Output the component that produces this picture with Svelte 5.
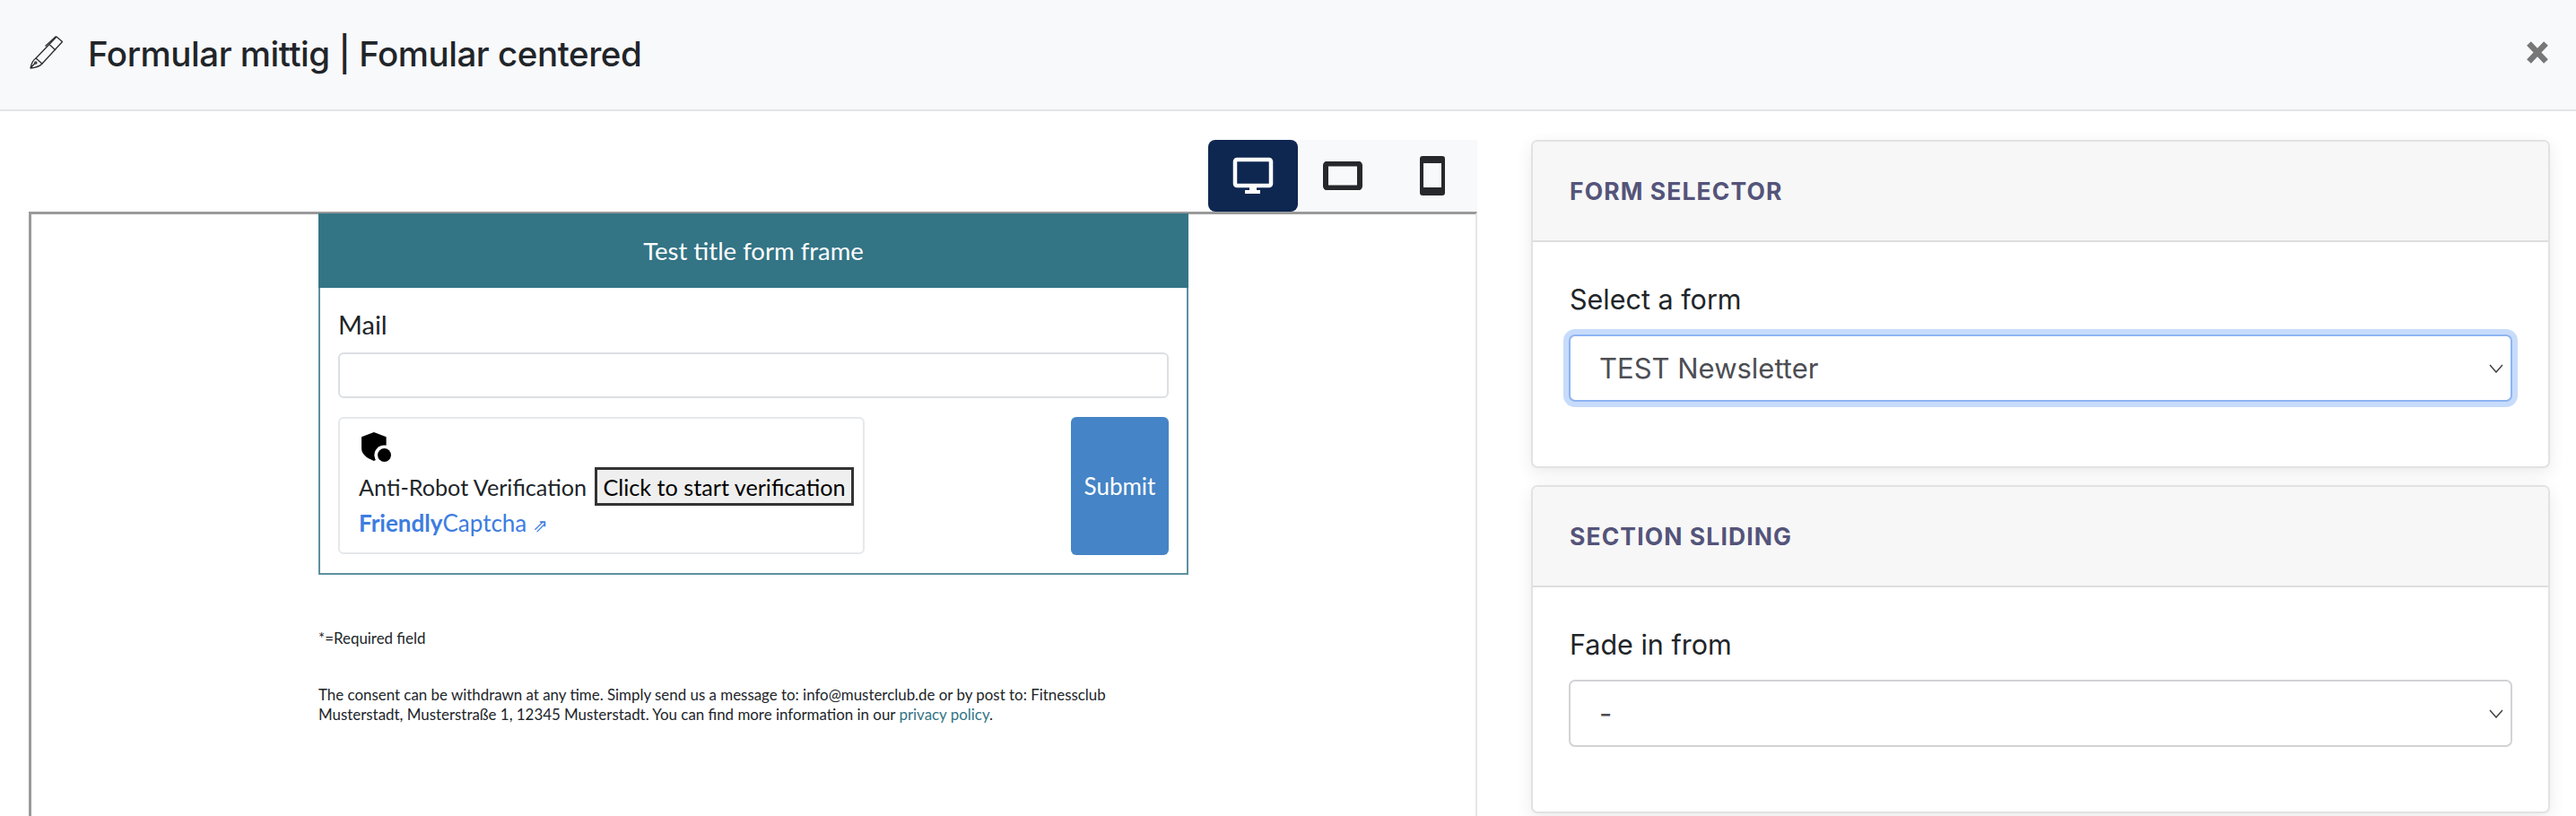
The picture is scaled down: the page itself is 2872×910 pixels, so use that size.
<script>
  const cards = [
    { title: 'FORM SELECTOR', label: 'Select a form', value: 'TEST Newsletter', focus: true },
    { title: 'SECTION SLIDING', label: 'Fade in from', value: '-', focus: false }
  ];
</script>

<div class="page">
  <header class="top">
    <svg class="pencil" viewBox="0 0 37 37" fill="none" stroke="#2a2c30" stroke-width="1.300" stroke-linejoin="round">
      <path d="M30 1 36.500 6.500 14 31 7 25Z"/>
      <path d="M7 25C3.500 27 2 31 1 36 6 35.500 11 34.500 14 31M1 36 6 30.500M17.500 11.500 29.500 .5M22.500 10 29 16"/>
      <circle cx="6.800" cy="30" r="1.100"/>
    </svg>
    <h1>Formular mittig | Fomular centered</h1>
    <svg class="close" viewBox="0 0 24 25"><path d="M2.500 2.500 21.500 22.500M21.500 2.500 2.500 22.500" stroke="#777" stroke-width="6.500"/></svg>
  </header>

  <main class="main">
    <section class="preview">
      <div class="devices">
        <button class="dev on" aria-label="Desktop">
          <svg width="46" height="42" viewBox="0 0 46 42" fill="none">
            <rect x="3" y="3" width="40" height="29" rx="2" stroke="#fff" stroke-width="4.500"/>
            <rect x="19" y="32" width="8" height="6" fill="#fff"/><rect x="14" y="37" width="17" height="4" fill="#fff"/>
          </svg>
        </button>
        <button class="dev" aria-label="Tablet">
          <svg width="44" height="32" viewBox="0 0 44 32" fill="none"><rect x="3" y="2.500" width="38" height="27" rx="2" stroke="#26282c" stroke-width="6"/></svg>
        </button>
        <button class="dev" aria-label="Mobile">
          <svg width="28" height="44" viewBox="0 0 28 44" fill="none"><path d="M3 0h22a3 3 0 0 1 3 3v38a3 3 0 0 1-3 3H3a3 3 0 0 1-3-3V3a3 3 0 0 1 3-3Zm1 8v27h20V8Z" fill="#26282c" fill-rule="evenodd"/></svg>
        </button>
      </div>

      <div class="frame">
        <div class="content">
          <div class="form">
            <div class="form-title">Test title form frame</div>
            <div class="form-body">
              <label class="mail" for="mail">Mail</label>
              <input id="mail" class="mail-input" />
              <div class="row">
                <div class="captcha">
                  <svg class="shield" viewBox="0 0 33 33">
                    <path d="M14 1 27 6v12c0 6-5 10-13 13C6 28 1 24 1 18V6Z" fill="#000"/>
                    <circle cx="25" cy="25" r="10.500" fill="#fff"/>
                    <circle cx="25" cy="25" r="7" fill="#000"/>
                  </svg>
                  <div class="cap-line">
                    <span>Anti-Robot Verification</span>
                    <button class="verify">Click to start verification</button>
                  </div>
                  <div class="brand"><b>Friendly</b>Captcha <span class="ext">⇗</span></div>
                </div>
                <button class="submit">Submit</button>
              </div>
            </div>
          </div>
          <p class="req">*=Required field</p>
          <p class="consent">The consent can be withdrawn at any time. Simply send us a message to: info@musterclub.de or by post to: Fitnessclub Musterstadt, Musterstraße 1, 12345 Musterstadt. You can find more information in our <a href="#top">privacy policy</a>.</p>
        </div>
      </div>
    </section>

    <aside class="side">
      {#each cards as c}
        <section class="card">
          <h2>{c.title}</h2>
          <div class="card-body">
            <div class="lbl">{c.label}</div>
            <select class:focus={c.focus} aria-label={c.label}><option>{c.value}</option></select>
          </div>
        </section>
      {/each}
    </aside>
  </main>
</div>

<style>
  :global(body) { margin: 0; background: #fff; overflow: hidden; }
  .page { width: 2872px; height: 910px; overflow: hidden; font-family: Inter, "Liberation Sans", sans-serif; color: #212529; }
  .top { height: 122px; box-sizing: content-box; display: flex; align-items: center; background: #f8f9fb; border-bottom: 2px solid #e3e4e6; padding: 0 32px 0 33px; }
  .pencil { width: 37px; height: 37px; margin-right: 28px; margin-top: -6px; }
  h1 { margin: 0; flex: 1; font-size: 38.500px; font-weight: 450; letter-spacing: -.46px; line-height: 1; color: #212529; margin-top: -2px; }
  .close { width: 24px; height: 25px; margin-right: -1px; margin-top: -6px; }

  .main { display: grid; grid-template-columns: 1615px 1136px; gap: 60px; padding: 32px 29px 0 32px; }
  .devices { display: flex; justify-content: flex-end; height: 80px; }
  .dev { width: 100px; height: 80px; border: 0; padding: 0; background: #f8f9fb; display: flex; align-items: center; justify-content: center; }
  .dev.on { background: #0e2750; border-radius: 8px; }
  .frame { border: 2px solid #e6e6e6; border-top: 3px solid #9a9a9a; border-left: 3px solid #9a9a9a; height: 700px; box-sizing: border-box; }
  .content { width: 970px; margin: -1px auto 0; font-family: Lato, "Open Sans", sans-serif; color: #212529; }
  .form { border: 2px solid #5f8fa0; border-top: 0; }
  .form-title { height: 83px; margin: 0 -2px; background: #337485; color: #fff; font-size: 27.500px; display: flex; align-items: center; justify-content: center; }
  .form-body { padding: 23px 20px 20px; }
  .mail { display: block; font-size: 29px; line-height: 35px; height: 35px; }
  .mail-input { display: block; box-sizing: border-box; width: 100%; height: 51px; margin: 14px 0 21px; border: 2px solid #dcdfe3; border-radius: 6px; background: #fff; }
  .row { display: flex; justify-content: space-between; }
  .captcha { box-sizing: border-box; width: 587px; height: 153px; border: 2px solid #e6e8ea; border-radius: 6px; padding: 14px 10px 0 21px; font-size: 25.200px; }
  .shield { display: block; width: 35px; height: 35px; margin: 0 0 0 2px; }
  .cap-line { display: flex; align-items: center; gap: 9px; margin-top: 5px; white-space: nowrap; }
  .verify { box-sizing: border-box; width: 289px; height: 43px; padding: 0; font: inherit; color: #000; background: #efefef; border: 3px solid #333; }
  .brand { color: #3d7de0; font-size: 26px; line-height: 32px; margin-top: 3px; }
  .brand b { font-weight: 700; }
  .ext { font-size: 20px; }
  .submit { width: 109px; height: 154px; border: 0; border-radius: 6px; background: #4584c6; color: #fff; font: inherit; font-size: 26px; padding: 0; }
  .req { margin: 60px 0 0; font-size: 16.900px; line-height: 22px; }
  .consent { margin: 41px 0 0; font-size: 16.900px; line-height: 22px; }
  .consent a { color: #337485; text-decoration: none; }

  .side { display: flex; flex-direction: column; gap: 19px; }
  .card { box-sizing: border-box; height: 366px; border: 2px solid #e2e2e2; border-radius: 7px; background: #fff; box-shadow: 0 6px 18px rgba(40, 45, 70, .09); overflow: hidden; }
  h2 { margin: 0; box-sizing: border-box; height: 112px; display: flex; align-items: center; padding-left: 41px; background: #f7f7f7; border-bottom: 2px solid #dedede; font-size: 26.500px; font-weight: 700; letter-spacing: 1.100px; color: #54547a; }
  .card-body { padding: 46px 40px 0 40px; }
  .lbl { font-size: 30.500px; line-height: 36px; padding-left: 1px; margin-bottom: 21px; }
  select { display: block; width: 100%; height: 75px; box-sizing: border-box; appearance: none; padding: 0 60px 0 32px; border: 2px solid #d3d3d6; border-radius: 7px; background: #fff url("data:image/svg+xml,%3Csvg xmlns='http://www.w3.org/2000/svg' viewBox='0 0 16 10'%3E%3Cpath d='M1 1l7 8 7-8' fill='none' stroke='%23444' stroke-width='1.500'/%3E%3C/svg%3E") no-repeat right 8px center / 16px 10px; font: 400 31px Inter, sans-serif; color: #4c4e53; }
  select.focus { border-color: #8eb4f0; box-shadow: 0 0 0 6px #c7dcfb; }
</style>
